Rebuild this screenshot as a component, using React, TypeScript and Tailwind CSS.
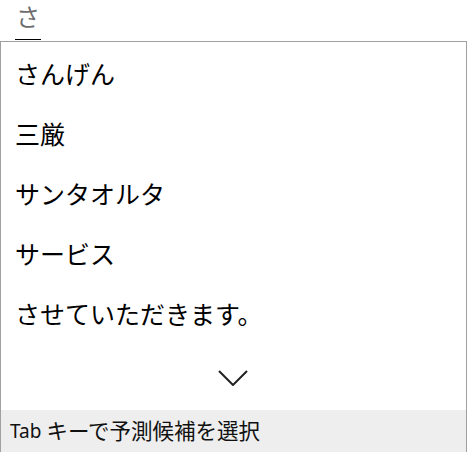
import React from "react";

const candidates = ["さんげん", "三厳", "サンタオルタ", "サービス", "させていただきます。"];

const font = { fontFamily: '"Noto Sans", "Noto Sans CJK JP", sans-serif' };

export default function App() {
  return (
    <div className="w-[467px] h-[452px] bg-white overflow-hidden flex flex-col" style={font}>
      {/* composition text */}
      <div className="h-[41px] pl-[15px] flex items-start">
        <span className="block h-[40px] pt-[1px] pb-[6px] px-[1px] text-[24px] leading-[32px] text-[#6b6b6b] border-b border-black">
          さ
        </span>
      </div>

      {/* suggestion box */}
      <div className="flex-1 flex flex-col border-t border-l border-r border-[#a0a0a0]">
        <ul className="pt-[3px]">
          {candidates.map((c) => (
            <li key={c} className="h-[60px] flex items-center pl-[14px] text-[25px] text-black">
              {c}
            </li>
          ))}
        </ul>

        <div className="flex-1 flex items-center justify-center">
          <svg width="30" height="16" viewBox="0 0 30 16" className="ml-[-2px]">
            <path d="M1 1 L15 15 L29 1" fill="none" stroke="#222" strokeWidth="2" />
          </svg>
        </div>

        <div className="h-[42px] bg-[#eeeeee] flex items-center pl-[9px] text-[#111]">
          <span className="text-[19px] mr-[5px]">Tab</span>
          <span className="text-[21.5px]">キーで予測候補を選択</span>
        </div>
      </div>
    </div>
  );
}
